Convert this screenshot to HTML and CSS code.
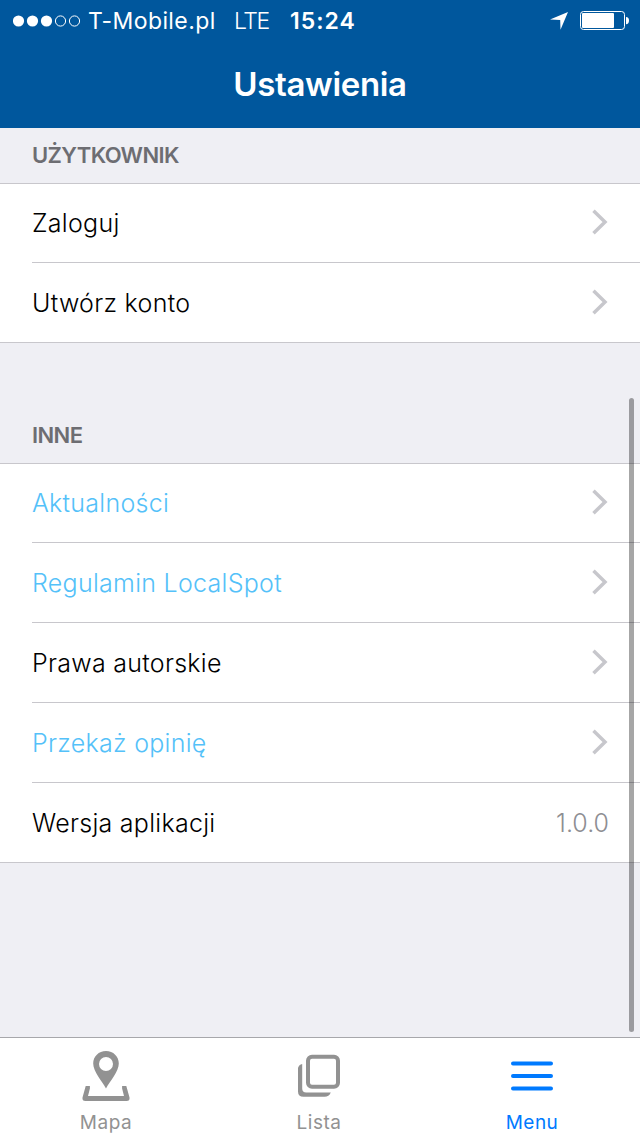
FILE: index.html
```html
<!DOCTYPE html>
<html lang="pl">
<head>
<meta charset="utf-8">
<title>Ustawienia</title>
<link rel="stylesheet" href="styles.css">
</head>
<body>
<div class="screen">
  <header class="navbar">
    <div class="status">
      <svg class="signal" width="68" height="12" viewBox="0 0 68 12">
        <g fill="#fff"><circle cx="5.500" cy="6" r="5.6"/><circle cx="19.500" cy="6" r="5.6"/><circle cx="33.500" cy="6" r="5.6"/></g>
        <g fill="none" stroke="#fff" stroke-width="1"><circle cx="47.500" cy="6" r="5.1"/><circle cx="61.500" cy="6" r="5.1"/></g>
      </svg>
      <span class="carrier">T-Mobile.pl</span>
      <span class="network">LTE</span>
      <span class="time">15:24</span>
      <svg class="location" width="18" height="18" viewBox="0 0 18 18"><path d="M18 0 10.5 17.8 10.2 8 0 7.6z" fill="#fff"/></svg>
      <svg class="battery" width="50" height="20" viewBox="0 0 50 20">
        <rect x=".5" y=".5" width="44" height="18" rx="3" fill="none" stroke="#fff"/>
        <rect x="2" y="2" width="32" height="15" rx="1" fill="#fff"/>
        <path d="M46 6a3 3.6 0 0 1 0 7.2z" fill="#fff"/>
      </svg>
    </div>
    <h1 class="title">Ustawienia</h1>
  </header>
  <main class="content">
    <h2 class="section-title section-first">UŻYTKOWNIK</h2>
    <ul class="group">
      <li class="row"><span class="label">Zaloguj</span><svg class="chevron" width="16" height="26" viewBox="0 0 16 26"><path d="M1.5 1.8 13 13 1.5 24.2"/></svg></li>
      <li class="row"><span class="label">Utwórz konto</span><svg class="chevron" width="16" height="26" viewBox="0 0 16 26"><path d="M1.5 1.8 13 13 1.5 24.2"/></svg></li>
    </ul>
    <h2 class="section-title">INNE</h2>
    <ul class="group">
      <li class="row"><span class="label link">Aktualności</span><svg class="chevron" width="16" height="26" viewBox="0 0 16 26"><path d="M1.5 1.8 13 13 1.5 24.2"/></svg></li>
      <li class="row"><span class="label link">Regulamin LocalSpot</span><svg class="chevron" width="16" height="26" viewBox="0 0 16 26"><path d="M1.5 1.8 13 13 1.5 24.2"/></svg></li>
      <li class="row"><span class="label">Prawa autorskie</span><svg class="chevron" width="16" height="26" viewBox="0 0 16 26"><path d="M1.5 1.8 13 13 1.5 24.2"/></svg></li>
      <li class="row"><span class="label link">Przekaż opinię</span><svg class="chevron" width="16" height="26" viewBox="0 0 16 26"><path d="M1.5 1.8 13 13 1.5 24.2"/></svg></li>
      <li class="row"><span class="label">Wersja aplikacji</span><span class="label value">1.0.0</span></li>
    </ul>
    <div class="scrollbar"></div>
  </main>
  <nav class="tabbar">
    <div class="tab">
      <svg width="48" height="52" viewBox="0 0 48 52">
        <path fill="#929292" fill-rule="evenodd" d="M24 1c7.300 0 12.800 5.500 12.800 12.500C36.800 21.500 28 31 24 38.500 20 31 11.200 21.500 11.200 13.500 11.200 6.500 16.700 1 24 1zm0 6a7 7 0 1 0 0 14 7 7 0 0 0 0-14z"/>
        <path fill="#929292" d="M3.700 36H7.900V38.500L6 46H42L40.100 38.500V36H44.300L47.500 47.500Q48 51 44.500 51H3.500Q0 51 .5 47.500z"/>
      </svg>
      <span class="tab-label">Mapa</span>
    </div>
    <div class="tab">
      <svg width="48" height="52" viewBox="0 0 48 52">
        <rect x="13" y="6.800" width="30" height="30" rx="4" fill="none" stroke="#929292" stroke-width="4"/>
        <path fill="#929292" d="M3 18Q4 14.500 7.200 14V38.500Q7.200 42.500 11.200 42.500H35.800Q34 46.800 29.500 46.800H8.500Q3 46.800 3 41.500z"/>
      </svg>
      <span class="tab-label">Lista</span>
    </div>
    <div class="tab active">
      <svg width="48" height="52" viewBox="0 0 48 52"><path d="M5 13.500H43M5 26H43M5 38.500H43" stroke="#007aff" stroke-width="4" stroke-linecap="round"/></svg>
      <span class="tab-label">Menu</span>
    </div>
  </nav>
</div>
</body>
</html>
```
FILE: styles.css
```css
* { box-sizing: border-box; }
body { margin: 0; font-family: Inter, "Liberation Sans", sans-serif; }
svg { display: block; flex: none; }
.screen { width: 640px; height: 1136px; display: flex; flex-direction: column; background: #efeff4; overflow: hidden; }
.navbar { height: 128px; flex: none; background: #00579d; color: #fff; }
.status { height: 40px; display: flex; align-items: center; padding: 2px 10px 0 13px; font-size: 23px; line-height: 38px; white-space: nowrap; }
.carrier { margin-left: 7px; width: 146px; letter-spacing: 0.4px; }
.network { width: 56px; font-weight: 300; letter-spacing: -1.4px; }
.time { font-weight: 600; letter-spacing: 1px; }
.location { margin-left: auto; }
.battery { margin-left: 12px; }
.title { margin: 0; height: 88px; display: flex; align-items: center; justify-content: center; font-size: 33px; font-weight: 600; letter-spacing: -0.35px; }
.content { position: relative; flex: 1; }
.section-title { margin: 0; height: 120px; padding: 0 32px 14px; display: flex; align-items: flex-end; font-size: 22px; line-height: 28px; font-weight: 600; letter-spacing: -0.6px; color: #6d6d72; }
.section-first { height: 55px; }
.group { margin: 0; padding: 0; list-style: none; background: #fff; border-top: 1px solid #c8c7cc; border-bottom: 1px solid #c8c7cc; }
.row { height: 80px; margin-left: 32px; padding-right: 32px; display: flex; align-items: center; justify-content: space-between; border-bottom: 1px solid #c8c7cc; }
.row:first-child { height: 79px; }
.row:last-child { height: 79px; border-bottom: 0; }
.label { font-size: 25px; line-height: 32px; font-weight: 300; letter-spacing: 0.28px; color: #000; white-space: nowrap; }
.link { color: #54c1f9; }
.value { margin-right: -1px; letter-spacing: 0; color: #8e8e93; }
.chevron { margin-bottom: 2px; fill: none; stroke: #c7c7cc; stroke-width: 3.5; }
.scrollbar { position: absolute; right: 6px; top: 270px; width: 5px; height: 634px; border-radius: 3px; background: rgba(0, 0, 0, 0.35); }
.tabbar { height: 99px; flex: none; display: grid; grid-template-columns: 212px 214px 212px; padding-top: 12px; border-top: 1px solid #a7a7ab; background: #fff; }
.tab { display: flex; flex-direction: column; align-items: center; color: #929292; }
.tab-label { margin-top: 9px; font-size: 19px; line-height: 24px; letter-spacing: 0.5px; }
.active { color: #007aff; }
```
